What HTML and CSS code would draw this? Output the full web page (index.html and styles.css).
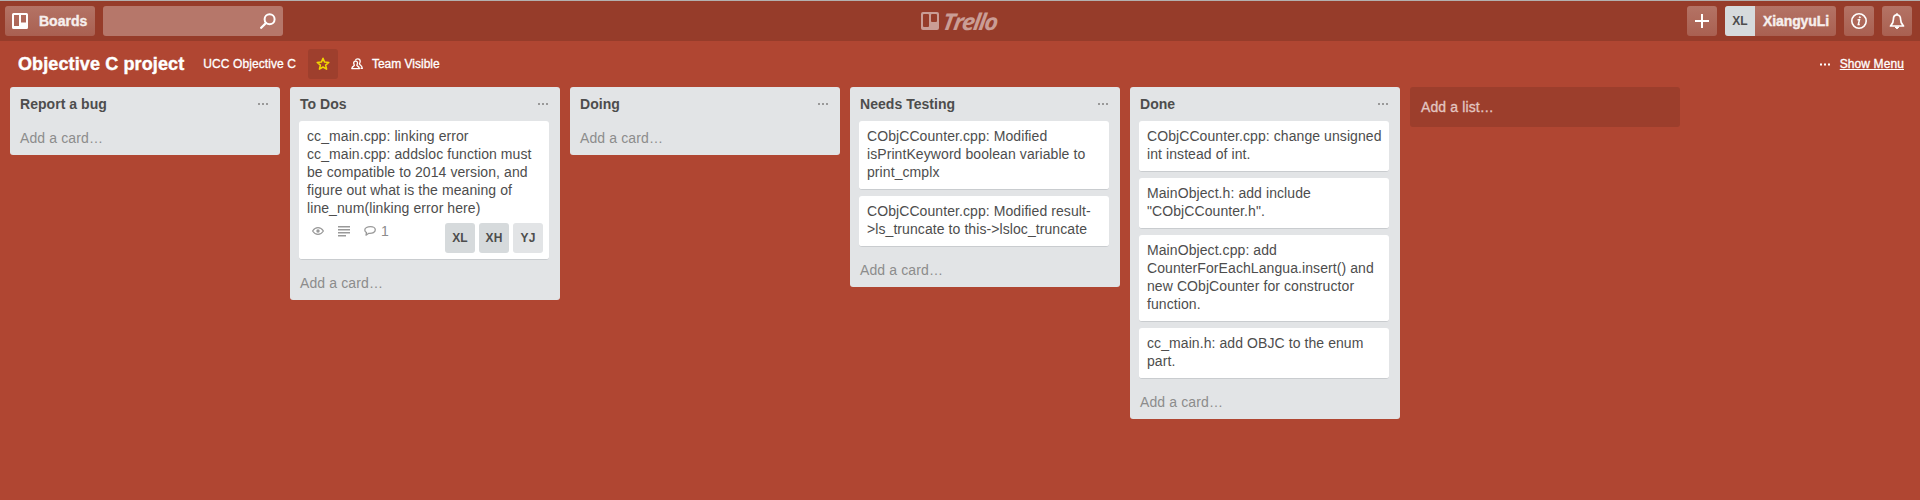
FILE: index.html
```html
<!DOCTYPE html>
<html lang="en">
<head>
<meta charset="utf-8">
<title>Objective C project | Trello</title>
<link rel="stylesheet" href="styles.css">
</head>
<body>
<header class="header">
  <div class="header-side">
    <a class="btn btn-boards">
      <svg width="16" height="16" viewBox="0 0 16 16"><path fill="#fff" fill-rule="evenodd" d="M1.5 0h13A1.5 1.5 0 0 1 16 1.500v13a1.500 1.500 0 0 1-1.500 1.500h-13A1.500 1.500 0 0 1 0 14.500v-13A1.500 1.500 0 0 1 1.500 0zM2 2v11h5V2zM9 2v7.500h5V2z"/></svg>
      <span class="boards-label">Boards</span>
    </a>
    <div class="search">
      <svg width="16" height="16" viewBox="0 0 16 16" fill="none" stroke="#fff"><circle cx="9.600" cy="6.300" r="5" stroke-width="2"/><path d="M6 10 1.200 14.800" stroke-width="2.300" stroke-linecap="round"/></svg>
    </div>
  </div>
  <a class="logo">
    <svg width="18" height="18" viewBox="0 0 18 18"><path fill="#ca9d95" fill-rule="evenodd" d="M2 0h14a2 2 0 0 1 2 2v14a2 2 0 0 1-2 2H2a2 2 0 0 1-2-2V2a2 2 0 0 1 2-2zM3 2a1 1 0 0 0-1 1v11a1 1 0 0 0 1 1h4a1 1 0 0 0 1-1V3a1 1 0 0 0-1-1zM11 2a1 1 0 0 0-1 1v6a1 1 0 0 0 1 1h4a1 1 0 0 0 1-1V3a1 1 0 0 0-1-1z"/></svg>
    <span class="logo-word">Trello</span>
  </a>
  <div class="header-side header-right">
    <a class="btn btn-icon"><svg width="14" height="14" viewBox="0 0 14 14" stroke="#fff" stroke-width="2"><path d="M7 0v14M0 7h14"/></svg></a>
    <a class="btn btn-user"><span class="user-initials">XL</span><span class="user-name">XiangyuLi</span></a>
    <a class="btn btn-icon"><svg width="16" height="16" viewBox="0 0 16 16" fill="none" stroke="#fff"><circle cx="8" cy="8" r="7.200" stroke-width="1.600"/><path d="M6.500 6.800h2l-1.200 4.600h1.500" stroke-width="1.500"/><circle cx="8.800" cy="4.300" r=".6" fill="#fff"/></svg></a>
    <a class="btn btn-icon"><svg width="16" height="17" viewBox="0 0 16 17" fill="none" stroke="#fff" stroke-width="1.700" stroke-linejoin="round"><path d="M8 1.800c-2.600 0-3.600 2-3.600 4.600 0 3.500-1 4.300-2.900 6.600h13c-1.900-2.300-2.900-3.100-2.900-6.600 0-2.600-1-4.600-3.600-4.600z"/><path d="M8 .3v1.500" /><path d="M6 14h4L8 15.800z" fill="#fff" stroke-width="1"/></svg></a>
  </div>
</header>

<nav class="board-bar">
  <h1 class="board-name">Objective C project</h1>
  <span class="board-org">UCC Objective C</span>
  <span class="star"><svg width="14" height="14" viewBox="0 0 14 14" fill="none" stroke="#f2d600" stroke-width="1.500" stroke-linejoin="round"><path d="M7 1.300 8.600 5.100l4.200.3-3.200 2.700 1 4.100L7 10l-3.600 2.200 1-4.100L1.200 5.400l4.200-.3z"/></svg></span>
  <span class="visibility"><svg width="12" height="12" viewBox="0 0 12 12" fill="none" stroke="#fff" stroke-width="1.300" stroke-linejoin="round"><path d="M4.600 3.200c1.200 0 1.900.8 1.900 1.900 0 1-.5 1.600-.7 2.200.4.900 2.300 1.100 2.600 3.300H.8c.3-2.200 2.200-2.400 2.600-3.300-.2-.6-.7-1.200-.7-2.200 0-1.100.7-1.900 1.900-1.900z"/><path d="M4.300 2.500C4.800 1.200 5.700.8 6.700.8c1.500 0 2.500 1 2.500 2.400 0 1.300-.6 2-.8 2.700.4 1.300 2.500 1.500 2.900 4.500H9.500"/></svg><span class="visibility-label">Team Visible</span></span>
  <span class="menu"><svg width="10" height="3" viewBox="0 0 10 3" fill="#fff"><path d="M0 .5h2v2H0zM4 .5h2v2H4zM8 .5h2v2H8z"/></svg><span class="menu-label">Show Menu</span></span>
</nav>

<main class="lists">
  <section class="list">
    <div class="list-head"><h2>Report a bug</h2><svg class="dots" width="10" height="2" viewBox="0 0 10 2"><path d="M0 0h2v2H0zM4 0h2v2H4zM8 0h2v2H8z"/></svg></div>
    <a class="add-card">Add a card…</a>
  </section>

  <section class="list">
    <div class="list-head"><h2>To Dos</h2><svg class="dots" width="10" height="2" viewBox="0 0 10 2"><path d="M0 0h2v2H0zM4 0h2v2H4zM8 0h2v2H8z"/></svg></div>
    <div class="cards">
      <article class="card">
        <p>cc_main.cpp: linking error<br>cc_main.cpp: addsloc function must<br>be compatible to 2014 version, and<br>figure out what is the meaning of<br>line_num(linking error here)</p>
        <div class="card-foot">
          <div class="badges">
            <svg width="12" height="8" viewBox="0 0 12 8" fill="none" stroke="#999"><path d="M.6 4C2 1.700 3.700.6 6 .6S10 1.700 11.400 4C10 6.300 8.300 7.400 6 7.400S2 6.300.6 4z" stroke-width="1.200"/><circle cx="6" cy="4" r="1.700" fill="#999" stroke="none"/></svg>
            <svg class="badge-desc" width="12" height="11" viewBox="0 0 12 11"><path fill="#999" d="M0 0h12v1.400H0zM0 3h12v1.400H0zM0 6h12v1.400H0zM0 9h8v1.400H0z"/></svg>
            <svg class="badge-comment" width="12" height="10" viewBox="0 0 12 10" fill="none" stroke="#999" stroke-width="1.300" stroke-linejoin="round"><path d="M6.500.7C3.500.7.8 1.800.8 4c0 1.300.8 2.100 1.700 2.600L2 9.200l2.800-1.900c3.700.3 6.500-1 6.500-3.500C11.300 1.800 9.300.7 6.500.7z"/></svg>
            <span class="badge-count">1</span>
          </div>
          <div class="members"><span class="member">XL</span><span class="member">XH</span><span class="member member-light">YJ</span></div>
        </div>
      </article>
    </div>
    <a class="add-card">Add a card…</a>
  </section>

  <section class="list">
    <div class="list-head"><h2>Doing</h2><svg class="dots" width="10" height="2" viewBox="0 0 10 2"><path d="M0 0h2v2H0zM4 0h2v2H4zM8 0h2v2H8z"/></svg></div>
    <a class="add-card">Add a card…</a>
  </section>

  <section class="list">
    <div class="list-head"><h2>Needs Testing</h2><svg class="dots" width="10" height="2" viewBox="0 0 10 2"><path d="M0 0h2v2H0zM4 0h2v2H4zM8 0h2v2H8z"/></svg></div>
    <div class="cards">
      <article class="card"><p>CObjCCounter.cpp: Modified<br>isPrintKeyword boolean variable to<br>print_cmplx</p></article>
      <article class="card"><p>CObjCCounter.cpp: Modified result-<br>&gt;ls_truncate to this-&gt;lsloc_truncate</p></article>
    </div>
    <a class="add-card">Add a card…</a>
  </section>

  <section class="list">
    <div class="list-head"><h2>Done</h2><svg class="dots" width="10" height="2" viewBox="0 0 10 2"><path d="M0 0h2v2H0zM4 0h2v2H4zM8 0h2v2H8z"/></svg></div>
    <div class="cards">
      <article class="card"><p>CObjCCounter.cpp: change unsigned<br>int instead of int.</p></article>
      <article class="card"><p>MainObject.h: add include<br>"CObjCCounter.h".</p></article>
      <article class="card"><p>MainObject.cpp: add<br>CounterForEachLangua.insert() and<br>new CObjCounter for constructor<br>function.</p></article>
      <article class="card"><p>cc_main.h: add OBJC to the enum<br>part.</p></article>
    </div>
    <a class="add-card">Add a card…</a>
  </section>

  <a class="add-list">Add a list…</a>
</main>
</body>
</html>
```
FILE: styles.css
```css
* { box-sizing: border-box; }

body {
  margin: 0;
  height: 500px;
  overflow: hidden;
  background: #b04632;
  color: #4d4d4d;
  font: 14px/18px "Liberation Sans", Arial, sans-serif;
}

h1, h2, p { margin: 0; }
svg { display: block; flex: none; }

/* Top bar */
.header {
  display: flex;
  align-items: center;
  height: 41px;
  padding: 0 5px;
  border-top: 1px solid #b3b0af;
  background: #963c2a;
}
.header-side { flex: 1; display: flex; }
.header-right { justify-content: flex-end; gap: 8px; padding-right: 3px; }
.btn {
  display: flex;
  align-items: center;
  height: 30px;
  border-radius: 3px;
  background: linear-gradient(to bottom, #b47365, #a96051);
  color: #f6efed;
  font-weight: bold;
}
.btn-boards { width: 90px; padding-left: 7px; }
.boards-label {
  margin-left: 11px;
  font-size: 14px;
  -webkit-text-stroke: .4px #f6efed;
}
.btn-icon { width: 30px; justify-content: center; }
.search {
  display: flex;
  align-items: center;
  justify-content: flex-end;
  width: 180px;
  height: 30px;
  margin-left: 8px;
  padding-right: 7px;
  border-radius: 3px;
  background: #b6776a;
}
.logo { display: flex; align-items: center; width: 76px; color: #ca9d95; }
.logo-word {
  margin-left: 4px;
  font: italic bold 23px/24px "Open Sans", sans-serif;
  letter-spacing: -1.500px;
  transform: scaleX(1.02) skewX(-8deg);
  transform-origin: left center;
}
.btn-user { width: 111px; overflow: hidden; }
.user-initials {
  width: 30px;
  line-height: 30px;
  text-align: center;
  background: #d6dadc;
  color: #4d4d4d;
  font-size: 12px;
}
.user-name { margin-left: 8px; letter-spacing: -.1px; -webkit-text-stroke: .4px #f6efed; }

/* Board title bar */
.board-bar {
  display: flex;
  align-items: center;
  height: 46px;
  padding: 0 16px 0 18px;
  color: #fff;
  font-size: 12px;
}
.board-name {
  font-size: 18px;
  line-height: 24px;
  letter-spacing: .12px;
  -webkit-text-stroke: .4px #fff;
}
.board-org { margin-left: 19px; letter-spacing: .08px; -webkit-text-stroke: .3px #fff; }
.star {
  display: flex;
  align-items: center;
  justify-content: center;
  width: 30px;
  height: 30px;
  margin-left: 12px;
  border-radius: 3px;
  background: #9e3f2d;
}
.visibility { display: flex; align-items: center; margin-left: 13px; }
.visibility-label { margin-left: 9px; -webkit-text-stroke: .3px #fff; }
.menu { display: flex; align-items: center; margin-left: auto; }
.menu-label {
  margin-left: 10px;
  letter-spacing: .1px;
  text-decoration: underline;
  -webkit-text-stroke: .3px #fff;
}

/* Lists */
.lists { display: flex; align-items: flex-start; gap: 10px; padding: 0 10px; }
.list { width: 270px; border-radius: 3px; background: #e2e4e6; }
.list-head {
  display: flex;
  align-items: center;
  justify-content: space-between;
  height: 34px;
  padding: 0 12px 0 10px;
}
.list-head h2 { font-size: 14px; line-height: 18px; letter-spacing: .04px; }
.dots { fill: #999; }
.cards { display: flex; flex-direction: column; gap: 6px; padding: 0 11px 6px 9px; }
.card {
  padding: 6px 8px 8px;
  border-bottom: 1px solid #c9cccf;
  border-radius: 3px;
  background: #fff;
  letter-spacing: .08px;
  white-space: nowrap;
}
.card-foot { display: flex; justify-content: space-between; margin: 6px -2px -2px 5px; }
.badges { display: flex; align-items: center; height: 16px; color: #8c8c8c; }
.badge-desc { margin-left: 14px; }
.badge-comment { margin-left: 14px; }
.badge-count { margin-left: 5px; }
.members { display: flex; gap: 4px; }
.member {
  width: 30px;
  height: 30px;
  border-radius: 3px;
  background: #d6dadc;
  font-size: 12px;
  font-weight: bold;
  line-height: 30px;
  text-align: center;
}
.member-light { background: #e2e4e6; }
.add-card {
  display: block;
  height: 34px;
  padding: 8px 10px;
  color: #8c8c8c;
  letter-spacing: .12px;
}
.add-list {
  width: 270px;
  height: 40px;
  padding: 11px;
  border-radius: 3px;
  background: #9c3e2c;
  color: #e3c6c1;
  letter-spacing: .12px;
  -webkit-text-stroke: .3px #e3c6c1;
}
```
